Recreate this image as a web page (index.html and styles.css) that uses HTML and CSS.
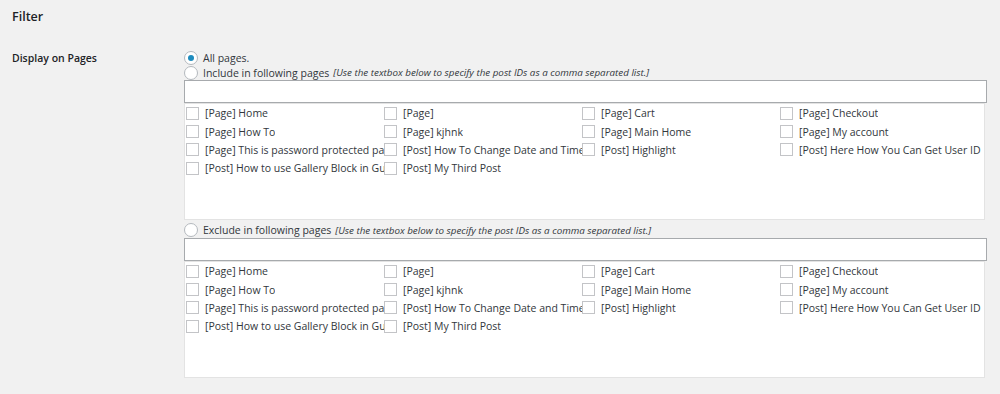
FILE: index.html
```html
<!DOCTYPE html>
<html>
<head>
  <title>Filter</title>
  <link rel="stylesheet" href="styles.css">
</head>
<body>
  <div class="wrap">
    <h2 class="title">Filter</h2>

    <div class="field-row">
      <div class="field-label">Display on Pages</div>
      <div class="field">
        <label class="radio-line"><input type="radio" name="pages" checked> All pages.</label>
        <label class="radio-line"><input type="radio" name="pages"> Include in following pages <em>[Use the textbox below to specify the post IDs as a comma separated list.]</em></label>
        <input type="text" class="ids-input">
        <div class="post-box">
          <label class="post"><input type="checkbox"><span>[Page] Home</span></label>
          <label class="post"><input type="checkbox"><span>[Page]</span></label>
          <label class="post"><input type="checkbox"><span>[Page] Cart</span></label>
          <label class="post"><input type="checkbox"><span>[Page] Checkout</span></label>
          <label class="post"><input type="checkbox"><span>[Page] How To</span></label>
          <label class="post"><input type="checkbox"><span>[Page] kjhnk</span></label>
          <label class="post"><input type="checkbox"><span>[Page] Main Home</span></label>
          <label class="post"><input type="checkbox"><span>[Page] My account</span></label>
          <label class="post"><input type="checkbox"><span>[Page] This is password protected page</span></label>
          <label class="post"><input type="checkbox"><span>[Post] How To Change Date and Time</span></label>
          <label class="post"><input type="checkbox"><span>[Post] Highlight</span></label>
          <label class="post"><input type="checkbox"><span>[Post] Here How You Can Get User ID</span></label>
          <label class="post"><input type="checkbox"><span>[Post] How to use Gallery Block in Gutenberg</span></label>
          <label class="post"><input type="checkbox"><span>[Post] My Third Post</span></label>
        </div>

        <label class="radio-line exclude"><input type="radio" name="pages"> Exclude in following pages <em>[Use the textbox below to specify the post IDs as a comma separated list.]</em></label>
        <input type="text" class="ids-input">
        <div class="post-box">
          <label class="post"><input type="checkbox"><span>[Page] Home</span></label>
          <label class="post"><input type="checkbox"><span>[Page]</span></label>
          <label class="post"><input type="checkbox"><span>[Page] Cart</span></label>
          <label class="post"><input type="checkbox"><span>[Page] Checkout</span></label>
          <label class="post"><input type="checkbox"><span>[Page] How To</span></label>
          <label class="post"><input type="checkbox"><span>[Page] kjhnk</span></label>
          <label class="post"><input type="checkbox"><span>[Page] Main Home</span></label>
          <label class="post"><input type="checkbox"><span>[Page] My account</span></label>
          <label class="post"><input type="checkbox"><span>[Page] This is password protected page</span></label>
          <label class="post"><input type="checkbox"><span>[Post] How To Change Date and Time</span></label>
          <label class="post"><input type="checkbox"><span>[Post] Highlight</span></label>
          <label class="post"><input type="checkbox"><span>[Post] Here How You Can Get User ID</span></label>
          <label class="post"><input type="checkbox"><span>[Post] How to use Gallery Block in Gutenberg</span></label>
          <label class="post"><input type="checkbox"><span>[Post] My Third Post</span></label>
        </div>
      </div>
    </div>
  </div>
</body>
</html>
```

FILE: styles.css
```css
body {
    margin: 0;
    background: #f1f1f1;
    font-family: "Open Sans", "Noto Sans", sans-serif;
    font-size: 10.5px;
    color: #32373c;
}
.wrap {
    padding: 0 0 0 12px;
}
.title {
    margin: 0;
    padding-top: 7px;
    font-size: 12.5px;
    font-weight: 600;
    color: #1d2327;
    line-height: 20px;
}
.field-row {
    display: flex;
    margin-top: 23px;
}
.field-label {
    width: 172px;
    flex: none;
    font-weight: 600;
    color: #1d2327;
    line-height: 16px;
}
.field {
    width: 803px;
}
.radio-line {
    display: flex;
    align-items: center;
    height: 15px;
    white-space: nowrap;
}
.radio-line em {
    font-size: 9.8px;
    margin-left: 4px;
}
.radio-line.exclude {
    margin-top: 2px;
    height: 16px;
}
input[type="radio"] {
    appearance: none;
    box-sizing: border-box;
    width: 14px;
    height: 14px;
    margin: 0 5px 0 0;
    border: 1px solid #b4b9be;
    border-radius: 50%;
    background: #fff;
    flex: none;
    position: relative;
}
input[type="radio"]:checked::before {
    content: "";
    position: absolute;
    left: 3px;
    top: 3px;
    width: 6px;
    height: 6px;
    border-radius: 50%;
    background: #1e8cbe;
}
.ids-input {
    display: block;
    box-sizing: border-box;
    width: 803px;
    height: 23px;
    margin: 0;
    border: 1px solid #a7aaad;
    background: #fff;
}
.post-box {
    box-sizing: border-box;
    width: 801px;
    height: 117px;
    background: #fff;
    border: 1px solid #e3e3e3;
    padding: 0 0 0 1px;
    display: grid;
    grid-template-columns: 198px 198px 198px 1fr;
    grid-auto-rows: 18.4px;
    align-content: start;
}
.post {
    display: flex;
    align-items: center;
    overflow: hidden;
    white-space: nowrap;
}
.post span {
    overflow: hidden;
}
input[type="checkbox"] {
    appearance: none;
    box-sizing: border-box;
    width: 13px;
    height: 13px;
    margin: 0 6px 0 0;
    border: 1px solid #c3c4c7;
    background: #fff;
    flex: none;
}
```
